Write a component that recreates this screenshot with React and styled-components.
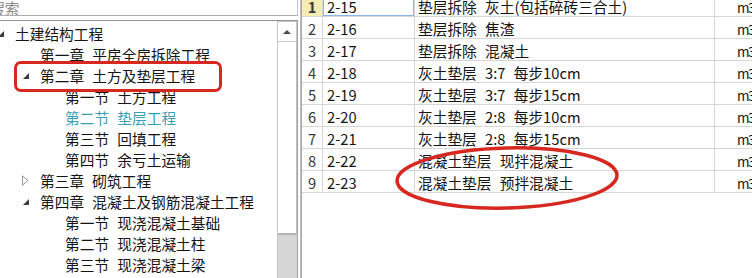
import React from "react"
import styled, { createGlobalStyle } from "styled-components"

const GlobalStyle = createGlobalStyle`
  html, body {
    margin: 0;
    padding: 0;
    background: #ffffff;
  }
  * {
    box-sizing: border-box;
  }
`

const Screen = styled.div`
  position: relative;
  display: flex;
  flex-direction: row;
  width: 752px;
  height: 278px;
  overflow: hidden;
  background: #ffffff;
  font-family: "Noto Sans CJK SC", "Noto Sans", sans-serif;
  font-size: 14.7px;
  color: #141414;
`

const LeftPane = styled.div`
  display: flex;
  flex-direction: column;
  flex: 0 0 310px;
  margin-left: -12px;
  height: 100%;
`

const SearchBox = styled.div`
  margin-top: -6px;
  height: 22px;
  border: 1px solid #abadb3;
  border-right-color: #c4c6cc;
  padding-left: 1px;
  line-height: 26px;
  color: #8a8a8a;
  white-space: nowrap;
  overflow: hidden;
`

const TreeBox = styled.div`
  display: flex;
  flex: 1 1 auto;
  margin-top: 4px;
  border-top: 1px solid #8e9399;
  border-right: 1px solid #a0a4a8;
  overflow: hidden;
`

const TreeList = styled.div`
  flex: 1 1 auto;
  padding-top: 2px;
`

const TreeRow = styled.div`
  display: flex;
  align-items: center;
  height: 21px;
  padding-left: ${p => 8 + p.$level * 25}px;
  white-space: pre;
  word-spacing: 5px;
  color: ${p => (p.$selected ? "#3a9fb3" : "#141414")};
`

const Expander = styled.span`
  flex: 0 0 19px;
  height: 21px;
  position: relative;
`

const OpenMark = styled.span`
  position: absolute;
  left: 2px;
  top: 8px;
  width: 0;
  height: 0;
  border-left: 6px solid transparent;
  border-bottom: 6px solid #3c3c3c;
`

const ClosedMark = styled.svg`
  position: absolute;
  left: 1px;
  top: 5px;
`

const Scrollbar = styled.div`
  display: flex;
  flex-direction: column;
  flex: 0 0 20px;
  border-left: 1px solid #c8c8c8;
  background: #d6d6d6;
`

const ScrollButton = styled.div`
  display: flex;
  align-items: center;
  justify-content: center;
  height: 21px;
  background: #ffffff;
  border: 1px solid #c8c8c8;
  border-left: none;
  &::after {
    content: "";
    border-left: 4px solid transparent;
    border-right: 4px solid transparent;
    border-bottom: 4px solid #4a4a4a;
  }
`

const ScrollThumb = styled.div`
  height: 193px;
  background: #ffffff;
  border-right: 1px solid #c0c0c0;
  border-bottom: 2px solid #b4b4b4;
`

const Splitter = styled.div`
  flex: 0 0 3px;
  border-right: 1px solid #bdbdbd;
`

const GridPane = styled.div`
  flex: 1 1 auto;
  margin-top: -5px;
  border-left: 1px solid #a8a8a8;
  overflow: hidden;
`

const GridRow = styled.div`
  display: flex;
  height: 22px;
  border-bottom: 1px solid #d6d6d6;
  width: 470px;
`

const Cell = styled.div`
  flex: 0 0 ${p => p.$w}px;
  height: 21px;
  padding-left: ${p => p.$pad}px;
  line-height: 24px;
  white-space: pre;
  word-spacing: 5px;
  overflow: hidden;
  border-right: ${p => (p.$last ? "none" : "1px solid #d6d6d6")};
  text-align: ${p => (p.$center ? "center" : "left")};
  background: ${p => (p.$current ? "#f8ecb2" : "transparent")};
  font-weight: ${p => (p.$current ? 700 : 400)};
  color: ${p => (p.$num ? "#3a3a3a" : "#141414")};
  box-shadow: ${p => (p.$focus ? "inset 0 0 0 1px #86b8e8" : "none")};
`

const UnitText = styled.span`
  letter-spacing: -1.5px;
  font-size: 13.5px;
`

const RectMark = styled.div`
  position: absolute;
  left: 14px;
  top: 61px;
  width: 208px;
  height: 31px;
  border: 3px solid #d6281f;
  border-radius: 7px;
  pointer-events: none;
`

const EllipseMark = styled.svg`
  position: absolute;
  left: 390px;
  top: 142px;
  pointer-events: none;
`

const tree = [
  { level: 0, text: "土建结构工程", mark: "open" },
  { level: 1, text: "第一章 平房全房拆除工程" },
  { level: 1, text: "第二章 土方及垫层工程", mark: "open" },
  { level: 2, text: "第一节 土方工程" },
  { level: 2, text: "第二节 垫层工程", selected: true },
  { level: 2, text: "第三节 回填工程" },
  { level: 2, text: "第四节 余亏土运输" },
  { level: 1, text: "第三章 砌筑工程", mark: "closed" },
  { level: 1, text: "第四章 混凝土及钢筋混凝土工程", mark: "open" },
  { level: 2, text: "第一节 现浇混凝土基础" },
  { level: 2, text: "第二节 现浇混凝土柱" },
  { level: 2, text: "第三节 现浇混凝土梁" },
]

const rows = [
  ["2-15", "垫层拆除 灰土(包括碎砖三合土)"],
  ["2-16", "垫层拆除 焦渣"],
  ["2-17", "垫层拆除 混凝土"],
  ["2-18", "灰土垫层 3:7 每步10cm"],
  ["2-19", "灰土垫层 3:7 每步15cm"],
  ["2-20", "灰土垫层 2:8 每步10cm"],
  ["2-21", "灰土垫层 2:8 每步15cm"],
  ["2-22", "混凝土垫层 现拌混凝土"],
  ["2-23", "混凝土垫层 预拌混凝土"],
]

const App = () => (
  <Screen>
    <GlobalStyle />
    <LeftPane>
      <SearchBox>搜索</SearchBox>
      <TreeBox>
        <TreeList>
          {tree.map((item, i) => (
            <TreeRow key={i} $level={item.level} $selected={item.selected}>
              <Expander>
                {item.mark === "open" && <OpenMark />}
                {item.mark === "closed" && (
                  <ClosedMark width="7" height="11" viewBox="0 0 7 11">
                    <path d="M0.5 0.8 L6 5.5 L0.5 10.2 Z" fill="none" stroke="#9a9a9a" strokeWidth="1" />
                  </ClosedMark>
                )}
              </Expander>
              {item.text}
            </TreeRow>
          ))}
        </TreeList>
        <Scrollbar>
          <ScrollButton />
          <ScrollThumb />
        </Scrollbar>
      </TreeBox>
    </LeftPane>
    <Splitter />
    <GridPane>
      {rows.map(([code, desc], i) => (
        <GridRow key={code}>
          <Cell $w={21} $pad={0} $center $num $current={i === 0}>{i + 1}</Cell>
          <Cell $w={92} $pad={4} $focus={i === 0}>{code}</Cell>
          <Cell $w={300} $pad={3}>{desc}</Cell>
          <Cell $w={57} $pad={22} $last><UnitText>m3</UnitText></Cell>
        </GridRow>
      ))}
    </GridPane>
    <RectMark />
    <EllipseMark width="236" height="74" viewBox="0 0 236 74">
      <ellipse cx="117" cy="36" rx="110" ry="30" fill="none" stroke="#d6281f" strokeWidth="3.5" transform="rotate(-1.5 117 36)" />
    </EllipseMark>
  </Screen>
)

export default App
